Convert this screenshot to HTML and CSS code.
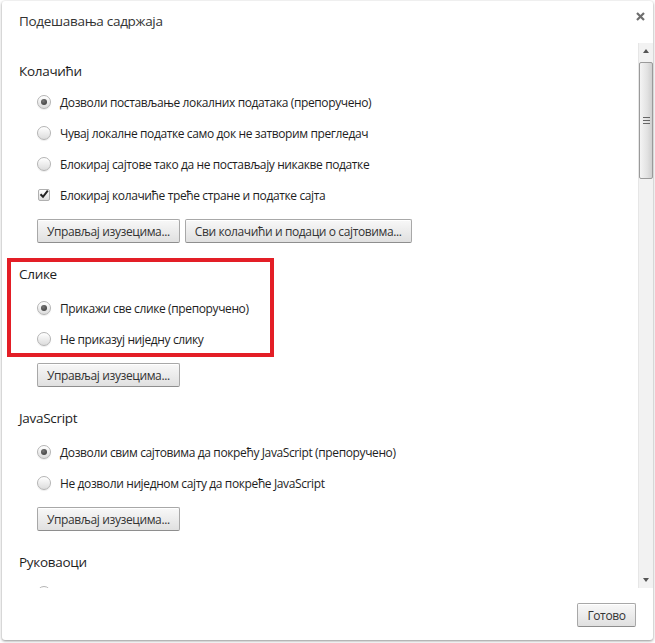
FILE: index.html
```html
<!DOCTYPE html>
<html lang="sr">
<head>
    <meta charset="UTF-8">
    <title>Подешавања садржаја</title>
    <link rel="stylesheet" href="styles.css">
</head>
<body>
    <div class="dialog">
        <div class="dialog-head">
            <div class="dialog-title">Подешавања садржаја</div>
            <div class="close-btn">
                <svg width="9" height="9" viewBox="0 0 9 9"><path d="M1 1L8 8M8 1L1 8" stroke="#6e6e6e" stroke-width="2.2"/></svg>
            </div>
        </div>
        <div class="dialog-content">
            <div class="scroll-body">
                <div class="section tight">
                    <h3>Колачићи</h3>
                    <div class="options">
                        <label class="opt"><span class="radio on"></span>Дозволи постављање локалних података (препоручено)</label>
                        <label class="opt"><span class="radio"></span>Чувај локалне податке само док не затворим прегледач</label>
                        <label class="opt"><span class="radio"></span>Блокирај сајтове тако да не постављају никакве податке</label>
                        <label class="opt check"><span class="checkbox">
                            <svg width="12" height="12" viewBox="0 0 12 12"><path d="M2.5 6.2L5 8.8L9.8 2.6" fill="none" stroke="#222" stroke-width="2"/></svg>
                        </span>Блокирај колачиће треће стране и податке сајта</label>
                    </div>
                    <div class="btn-row">
                        <button class="btn">Управљај изузецима...</button>
                        <button class="btn">Сви колачићи и подаци о сајтовима...</button>
                    </div>
                </div>

                <div class="section">
                    <div class="highlight"></div>
                    <h3>Слике</h3>
                    <div class="options">
                        <label class="opt"><span class="radio on"></span>Прикажи све слике (препоручено)</label>
                        <label class="opt"><span class="radio"></span>Не приказуј ниједну слику</label>
                    </div>
                    <div class="btn-row">
                        <button class="btn">Управљај изузецима...</button>
                    </div>
                </div>

                <div class="section">
                    <h3>JavaScript</h3>
                    <div class="options">
                        <label class="opt"><span class="radio on"></span>Дозволи свим сајтовима да покрећу JavaScript (препоручено)</label>
                        <label class="opt"><span class="radio"></span>Не дозволи ниједном сајту да покреће JavaScript</label>
                    </div>
                    <div class="btn-row">
                        <button class="btn">Управљај изузецима...</button>
                    </div>
                </div>

                <div class="section tight">
                    <h3>Руковаоци</h3>
                    <div class="options">
                        <!-- остатак листе је скролован испод -->
                        <div class="opt"><span class="radio"></span></div>
                    </div>
                </div>
            </div>
            <div class="scrollbar">
                <div class="sb-arrow up"></div>
                <div class="sb-thumb"><span class="grip"></span></div>
                <div class="sb-track"></div>
                <div class="sb-arrow down"></div>
            </div>
        </div>
        <div class="dialog-foot">
            <button class="btn">Готово</button>
        </div>
    </div>
</body>
</html>
```

FILE: styles.css
```css
*{margin: 0; padding: 0; box-sizing: border-box;}
body {
    width: 655px;
    height: 643px;
    padding: 1px 2px 3px 2px;
    background: #fff;
    font-family: "Open Sans", "Noto Sans", sans-serif;
    font-size: 12px;
    letter-spacing: -0.38px;
    color: #1e1e1e;
    overflow: hidden;
}
.dialog {
    width: 651px;
    height: 639px;
    background: #fff;
    border-radius: 3px;
    box-shadow: 0 1px 3px rgba(0, 0, 0, 0.45);
    display: flex;
    flex-direction: column;
}
.dialog-head {
    height: 42px;
    padding: 10px 8px 0 17px;
    display: flex;
    justify-content: space-between;
    align-items: flex-start;
}
.dialog-title {
    font-size: 13.5px;
    line-height: 20px;
    letter-spacing: -0.3px;
    color: #333;
}
.close-btn {
    margin-top: 1px;
    width: 9px;
    height: 9px;
}
.close-btn svg {
    display: block;
}
.dialog-content {
    height: 545px;
    display: flex;
}
.scroll-body {
    flex: 1;
    overflow: hidden;
    padding: 18px 0 0 17px;
}
.section {
    position: relative;
    margin-bottom: 21px;
}
.section h3 {
    font-weight: normal;
    font-size: 13.5px;
    line-height: 20px;
    letter-spacing: -0.3px;
    color: #1e1e1e;
}
.options {
    margin-top: 8.5px;
    padding-left: 18px;
}
.section.tight .options {
    margin-top: 5.5px;
}
.opt {
    height: 31px;
    display: flex;
    align-items: center;
    gap: 9px;
    white-space: nowrap;
}
.opt.check {
    gap: 10px;
}
.radio {
    width: 14px;
    height: 14px;
    border-radius: 50%;
    border: 1px solid #b4b4b4;
    background: linear-gradient(#fff, #dcdcdc);
    box-shadow: inset 0 1px 0 #fff, 0 1px 1px rgba(0, 0, 0, 0.08);
    display: flex;
    align-items: center;
    justify-content: center;
    flex-shrink: 0;
}
.radio.on::after {
    content: "";
    width: 6px;
    height: 6px;
    border-radius: 50%;
    background: radial-gradient(circle at 40% 35%, #777, #333);
}
.checkbox {
    width: 12px;
    height: 12px;
    margin-left: 1px;
    border: 1px solid #b0b0b0;
    border-radius: 2px;
    background: linear-gradient(#fff, #dcdcdc);
    position: relative;
    flex-shrink: 0;
}
.checkbox svg {
    position: absolute;
    left: -1px;
    top: -2px;
}
.btn-row {
    margin-top: 8.5px;
    padding-left: 18px;
    display: flex;
    gap: 5px;
}
.btn {
    height: 24px;
    padding: 0 9px;
    font-family: inherit;
    font-size: 12px;
    letter-spacing: -0.38px;
    color: #333;
    border: 1px solid #a8a8a8;
    border-bottom-color: #8e8e8e;
    border-radius: 2px;
    background: linear-gradient(#f8f8f8, #e0e0e0);
    box-shadow: inset 0 1px 0 #fff;
}
.highlight {
    position: absolute;
    left: -12px;
    top: -6px;
    width: 267px;
    height: 99px;
    border: 4px solid #e31e26;
}
.scrollbar {
    width: 15px;
    display: flex;
    flex-direction: column;
    background: #f2f2f2;
    border-left: 1px solid #e6e6e6;
}
.sb-arrow {
    height: 18px;
    display: flex;
    align-items: center;
    justify-content: center;
}
.sb-arrow::after {
    content: "";
    border-left: 3.5px solid transparent;
    border-right: 3.5px solid transparent;
}
.sb-arrow.up::after {
    border-bottom: 4px solid #555;
    margin-top: -2px;
}
.sb-arrow.down::after {
    border-top: 4px solid #555;
    margin-bottom: -2px;
}
.sb-thumb {
    height: 117px;
    margin: 1px 0 0 0;
    border: 1px solid #9a9a9a;
    border-radius: 2px;
    background: linear-gradient(90deg, #f4f4f4, #e2e2e2 60%, #cfcfcf);
    display: flex;
    align-items: center;
    justify-content: center;
}
.grip {
    width: 7px;
    height: 7px;
    border-top: 1px solid #666;
    border-bottom: 1px solid #666;
    position: relative;
}
.grip::after {
    content: "";
    position: absolute;
    left: 0;
    right: 0;
    top: 2px;
    border-top: 1px solid #666;
}
.sb-track {
    flex: 1;
}
.dialog-foot {
    flex: 1;
    display: flex;
    justify-content: flex-end;
    align-items: flex-start;
    padding: 15px 17px 0 0;
}
.dialog-foot .btn {
    width: 59px;
    padding: 0;
}
```
